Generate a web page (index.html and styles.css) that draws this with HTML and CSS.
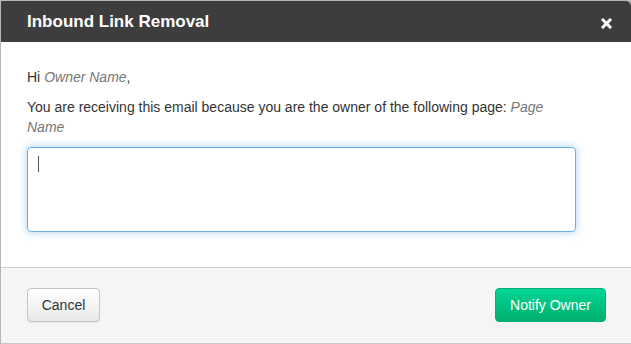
FILE: index.html
```html
<!DOCTYPE html>
<html lang="en">
<head>
    <meta charset="UTF-8">
    <title>Inbound Link Removal</title>
    <link rel="stylesheet" href="styles.css">
</head>
<body>
    <div class="modal">
        <div class="modal-header">
            <h3>Inbound Link Removal</h3>
            <button class="close-btn" aria-label="Close">
                <svg width="11" height="11" viewBox="0 0 11 11"><path d="M2 2 L9 9 M9 2 L2 9" stroke="#fff" stroke-width="3" stroke-linecap="square"/></svg>
            </button>
        </div>
        <div class="modal-body">
            <p>Hi <i>Owner Name</i>,</p>
            <p>You are receiving this email because you are the owner of the following page: <i>Page</i> <i>Name</i></p>
            <div class="message">
                <span class="caret"></span>
            </div>
        </div>
        <div class="modal-footer">
            <button class="btn btn-cancel">Cancel</button>
            <button class="btn btn-notify">Notify Owner</button>
        </div>
    </div>
</body>
</html>
```

FILE: styles.css
```css
* {
    margin: 0;
    padding: 0;
    box-sizing: border-box;
}
body {
    background: #b5b5b5;
    font-family: "Liberation Sans", Arial, sans-serif;
    font-size: 14px;
    color: #333;
    overflow: hidden;
}
.modal {
    margin: 1px 1px 0 1px;
    width: 630px;
    height: 343px;
    background: #fff;
    border-radius: 1px 5px 0 0;
    overflow: hidden;
    display: flex;
    flex-direction: column;
}
.modal-header {
    height: 41px;
    background: #3d3d3d;
    display: flex;
    align-items: center;
    justify-content: space-between;
    padding: 0 19px 0 26px;
}
.modal-header h3 {
    color: #fff;
    font-size: 17px;
    font-weight: bold;
    margin-top: 1px;
}
.close-btn {
    background: none;
    border: none;
    width: 11px;
    height: 11px;
    display: flex;
    margin-top: 4px;
}
.modal-body {
    padding: 25px 54px 35px 26px;
    line-height: 20px;
}
.modal-body p {
    margin-bottom: 10px;
}
.modal-body i {
    color: #777;
}
.message {
    width: 549px;
    height: 85px;
    border: 1px solid #66afe9;
    border-radius: 4px;
    box-shadow: 0 0 8px rgba(102, 175, 233, 0.6);
    padding: 8px 10px;
}
.caret {
    display: block;
    width: 1px;
    height: 16px;
    background: #555;
}
.modal-footer {
    flex: 1;
    background: #f5f5f5;
    border-top: 1px solid #d0d0d0;
    border-bottom: 1px solid #c8c8c8;
    display: flex;
    justify-content: space-between;
    align-items: flex-start;
    padding: 20px 25px 0 26px;
}
.btn {
    height: 34px;
    border-radius: 4px;
    font-family: "Liberation Sans", Arial, sans-serif;
    font-size: 14px;
}
.btn-cancel {
    width: 73px;
    height: 34px;
    color: #333;
    border: 1px solid #c4c4c4;
    background: linear-gradient(#fff, #e9e9e9);
    box-shadow: 0 1px 1px rgba(0, 0, 0, 0.05);
}
.btn-notify {
    width: 111px;
    color: #fff;
    border: 1px solid #00b173;
    background: linear-gradient(#03d693, #00af70);
}
```
